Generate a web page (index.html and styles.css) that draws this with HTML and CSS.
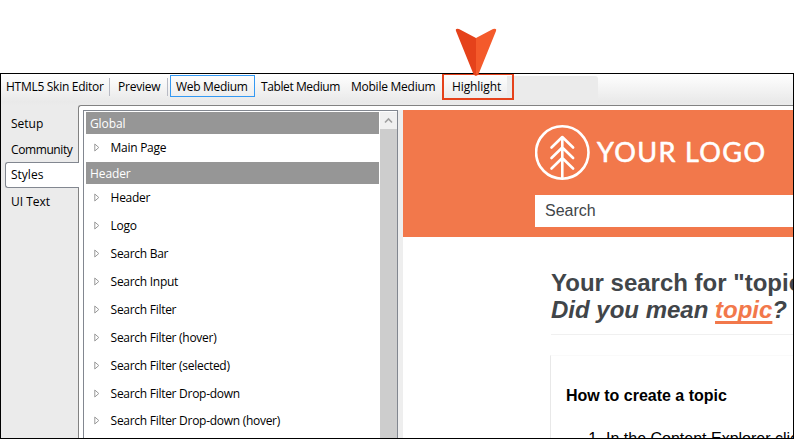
FILE: index.html
```html
<!DOCTYPE html>
<html lang="en">
<head>
<meta charset="utf-8">
<title>HTML5 Skin Editor</title>
<link rel="stylesheet" href="styles.css">
</head>
<body>
<div class="window">
  <div class="toolbar">
    <span class="title">HTML5 Skin Editor</span>
    <span class="button preview">Preview</span>
    <span class="button web">Web Medium</span>
    <span class="button tablet">Tablet Medium</span>
    <span class="button mobile">Mobile Medium</span>
    <span class="button highlight">Highlight</span>
    <span class="overflow"></span>
  </div>
  <div class="body">
    <nav class="tabs">
      <span class="tab">Setup</span>
      <span class="tab community">Community</span>
      <span class="tab active">Styles</span>
      <span class="tab">UI Text</span>
    </nav>
    <main class="panel">
      <div class="listbox">
        <div class="list">
          <div class="group">Global</div>
          <div class="item main-page"><svg class="arrow" viewBox="0 0 6 9"><path d="M.8 1v7L4.8 4.5z"/></svg><span>Main Page</span></div>
          <div class="group">Header</div>
          <div class="item"><svg class="arrow" viewBox="0 0 6 9"><path d="M.8 1v7L4.8 4.5z"/></svg><span>Header</span></div>
          <div class="item"><svg class="arrow" viewBox="0 0 6 9"><path d="M.8 1v7L4.8 4.5z"/></svg><span>Logo</span></div>
          <div class="item"><svg class="arrow" viewBox="0 0 6 9"><path d="M.8 1v7L4.8 4.5z"/></svg><span>Search Bar</span></div>
          <div class="item"><svg class="arrow" viewBox="0 0 6 9"><path d="M.8 1v7L4.8 4.5z"/></svg><span>Search Input</span></div>
          <div class="item"><svg class="arrow" viewBox="0 0 6 9"><path d="M.8 1v7L4.8 4.5z"/></svg><span>Search Filter</span></div>
          <div class="item"><svg class="arrow" viewBox="0 0 6 9"><path d="M.8 1v7L4.8 4.5z"/></svg><span>Search Filter (hover)</span></div>
          <div class="item"><svg class="arrow" viewBox="0 0 6 9"><path d="M.8 1v7L4.8 4.5z"/></svg><span>Search Filter (selected)</span></div>
          <div class="item"><svg class="arrow" viewBox="0 0 6 9"><path d="M.8 1v7L4.8 4.5z"/></svg><span>Search Filter Drop-down</span></div>
          <div class="item last"><svg class="arrow" viewBox="0 0 6 9"><path d="M.8 1v7L4.8 4.5z"/></svg><span>Search Filter Drop-down (hover)</span></div>
        </div>
        <div class="scrollbar"><div class="scroll-up"><svg width="9" height="7" viewBox="0 0 9 7"><path d="M1 5.5 4.5 2 8 5.5"/></svg></div></div>
      </div>
      <div class="splitter"></div>
      <section class="page">
        <header class="banner">
          <svg class="logo" width="240" height="56" viewBox="0 0 240 56">
            <circle cx="27.3" cy="27.5" r="26.2"/>
            <path d="M27.3 53V12M16.5 22.5 27.3 12l10.8 10.5M16.5 33 27.3 22.5 38.1 33M16.5 43.5 27.3 33l10.8 10.5"/>
            <text x="62" y="37" textLength="168" lengthAdjust="spacing">YOUR LOGO</text>
          </svg>
          <div class="search">Search</div>
        </header>
        <div class="results">
          <h1>Your search for "topic"<br><em>Did you mean <a>topic</a>?</em></h1>
          <article class="card">
            <h2>How to create a topic</h2>
            <ol><li>In the Content Explorer click</li></ol>
          </article>
        </div>
      </section>
    </main>
  </div>
</div>
<svg class="pointer" width="42" height="48" viewBox="0 0 42 48"><path class="pointer-left" d="M1 3Q0 0 4 1L21 10V48Q19 48 18 45Z"/><path class="pointer-right" d="M41 3Q42 0 38 1L21 10V48Q23 48 24 45Z"/></svg>
</body>
</html>
```

FILE: styles.css
```css
* { box-sizing: border-box; }
body { margin: 0; height: 439px; overflow: hidden; padding-top: 73px; background: #fff; font: 12px/16px "Open Sans", "Noto Sans", sans-serif; color: #000; }
.window { width: 794px; height: 366px; border: 1px solid #000; overflow: hidden; background: #ebebeb; }
.toolbar { height: 31px; display: flex; align-items: flex-start; padding-left: 5px; background: linear-gradient(#fff, #e9e9e9 90%, #ebebeb); white-space: nowrap; }
.title { width: 104px; margin-top: 4px; line-height: 18px; letter-spacing: -.28px; border-right: 1px solid #b8bac4; }
.button { line-height: 18px; margin-top: 4px; letter-spacing: -.22px; }
.preview { width: 58px; padding-left: 8px; border-right: 1px solid #b8bac4; }
.web { width: 85px; height: 22px; margin: 1px 0 0 2px; padding-left: 5px; line-height: 22px; border: 1px solid #3399f3; letter-spacing: -.3px; }
.tablet { width: 91px; padding-left: 6px; letter-spacing: -.4px; }
.mobile { width: 95px; padding-left: 5px; margin-right: 1px; letter-spacing: -.25px; }
.button.highlight { width: 72px; height: 27px; margin-top: -1px; padding-left: 8px; line-height: 24px; letter-spacing: -.1px; border: 2px solid #e5421b; z-index: 1; }
.overflow { width: 91px; height: 26px; margin: 2px 0 0 -7px; border-radius: 0 3px 0 0; background: #ebebeb; }
.body { display: flex; height: 333px; }
.tabs { width: 78px; padding: 6px 0 0 5px; flex: none; z-index: 1; }
.tab { display: block; height: 26px; padding-left: 5px; line-height: 26px; white-space: nowrap; }
.community { letter-spacing: -.4px; }
.tab.active { margin-left: -1px; background: #fff; border: 1px solid #828790; border-right: 0; border-radius: 3px 0 0 3px; line-height: 24px; }
.tab.active { height: 26px; margin-top: -1px; margin-bottom: 1px; }
.panel { width: 716px; flex: none; margin-left: -1px; border: 1px solid #828282; border-right: 0; border-bottom: 0; border-radius: 3px 0 0; padding: 4px 0 0 4px; background: #fff; display: flex; }
.listbox { width: 315px; height: 340px; flex: none; border: 1px solid #828790; padding: 1px 0 0 1px; display: flex; }
.list { flex: 1; white-space: nowrap; }
.group { width: 293px; height: 22px; margin-left: 1px; padding-left: 4px; line-height: 23px; letter-spacing: -.1px; color: #fff; background: #969696; }
.item { display: flex; height: 28px; line-height: 28px; padding-left: 9px; letter-spacing: -.28px; }
.item span { margin-left: 10.6px; }
.last { height: 27px; line-height: 26px; }
.arrow { width: 6px; height: 9px; margin-top: 9px; fill: none; stroke: #999; }
.last .arrow { margin-top: 8px; }
.scrollbar { width: 17px; background: #cdcdcd; }
.scroll-up { height: 17px; background: #f0f0f0; display: grid; place-items: center; }
.scroll-up svg { fill: none; stroke: #a0a0a0; stroke-width: 1.6; }
.splitter { width: 5px; flex: none; background: #eee; }
.page { width: 390px; flex: none; overflow: hidden; font-family: "Liberation Sans", sans-serif; }
.banner { height: 127px; padding: 15px 0 0 132px; background: #f2784b; }
.logo { display: block; fill: none; stroke: #fff; stroke-width: 2.6; stroke-linecap: round; stroke-linejoin: round; }
.logo text { font: 27px Lato, sans-serif; fill: #fff; stroke-width: .6; }
.search { height: 32px; margin-top: 14px; padding-left: 10px; background: #fff; font-size: 16px; line-height: 32px; color: #414549; }
.results { padding: 32px 0 0 148px; white-space: nowrap; }
h1 { margin: 0; height: 66px; border-bottom: 1px solid #f0f0f0; font-size: 24px; line-height: 27px; color: #414549; }
h1 a { color: #f2784b; text-decoration: underline; text-decoration-thickness: 3px; text-underline-offset: 3px; text-decoration-skip-ink: none; }
.card { height: 100px; margin: 20px 0 0 -1px; border-left: 1px solid #e8e8e8; border-top: 1px solid #fafafa; padding: 30px 0 0 15px; }
h2 { margin: 0; font-size: 16px; line-height: 20px; }
ol { margin: 23px 0 0; padding-left: 40px; font-size: 16px; line-height: 20px; }
.pointer { position: absolute; left: 455px; top: 28px; }
.pointer-left { fill: #e5421b; }
.pointer-right { fill: #f45a2b; }
```
